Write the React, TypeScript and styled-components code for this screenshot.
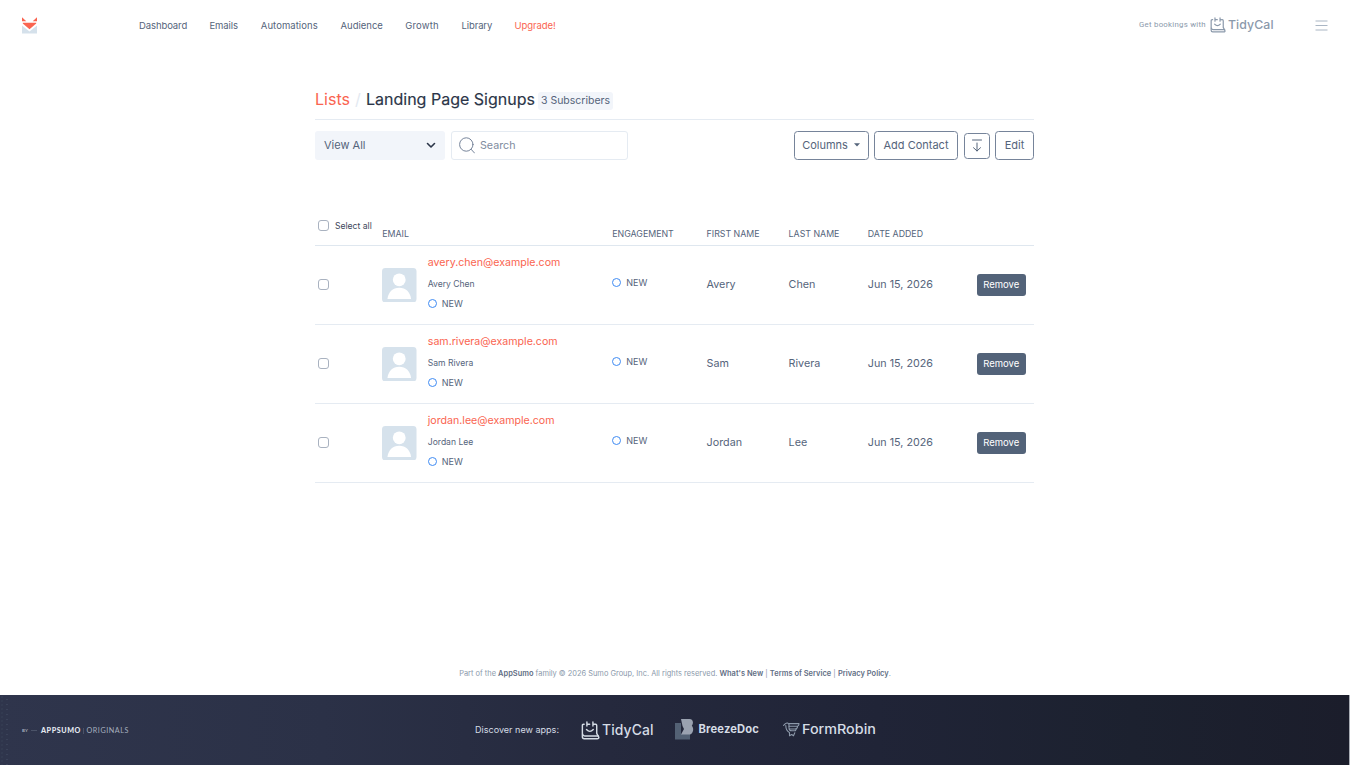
import React from 'react';
import styled, { createGlobalStyle, css } from 'styled-components';

const c = {
  coral: '#fa6450',
  navy: '#2b3548',
  slate: '#55647b',
  muted: '#8b99ab',
  line: '#e5ebf2',
  soft: '#f2f5fa',
};

const Global = createGlobalStyle`
  * { box-sizing: border-box; }
  body {
    margin: 0;
    background: #fff;
    font-family: Inter, "Liberation Sans", sans-serif;
    color: ${c.slate};
    overflow: hidden;
  }
  button, input { font-family: inherit; }
  a { color: inherit; text-decoration: none; }
`;

const Page = styled.div`
  width: 1350px;
  height: 765px;
  display: flex;
  flex-direction: column;
`;

/* ---------- top bar ---------- */
const TopBar = styled.header`
  height: 50px;
  flex: none;
  display: flex;
  align-items: center;
  padding: 0 22px;
`;
const LogoLink = styled.a`
  width: 117px;
  display: flex;
`;
const Nav = styled.nav`
  display: flex;
  gap: 22.4px;
  flex: 1;
`;
const NavLink = styled.a<{ $w: number; $track?: number; $hot?: boolean }>`
  width: ${p => p.$w}px;
  padding-top: 1px;
  font-size: 9.5px;
  letter-spacing: ${p => p.$track ?? 0}px;
  line-height: 16px;
  white-space: nowrap;
  color: ${p => (p.$hot ? c.coral : c.slate)};
`;
const Promo = styled.div`
  display: flex;
  align-items: center;
  gap: 4px;
  width: 176px;
  color: ${c.muted};
`;
const PromoText = styled.span`
  font: 400 7.8px/14px Roboto, sans-serif;
  letter-spacing: 0.27px;
  white-space: nowrap;
`;
const TidyMark = styled.span<{ $size: number }>`
  display: flex;
  align-items: center;
  gap: 2px;
  font-size: ${p => p.$size}px;
  line-height: 18px;
  font-weight: 500;
  letter-spacing: 0.1px;
`;
const MenuButton = styled.button`
  display: flex;
  border: 0;
  padding: 0;
  background: none;
`;

/* ---------- content ---------- */
const Main = styled.main`
  width: 719px;
  margin-left: 315px;
  flex: 1;
`;
const TitleRow = styled.div`
  height: 70px;
  padding-top: 40px;
  display: flex;
  align-items: flex-start;
  border-bottom: 1px solid ${c.line};
`;
const Crumb = styled.a`
  font-size: 16.1px;
  line-height: 18px;
  color: ${c.coral};
  width: 35px;
`;
const Slash = styled.span`
  font-size: 16px;
  line-height: 18px;
  width: 16px;
  text-align: center;
  color: #e3e9f1;
`;
const Title = styled.h1`
  margin: 0 4px 0 0;
  width: 168px;
  white-space: nowrap;
  font-size: 16px;
  line-height: 18px;
  font-weight: 400;
  -webkit-text-stroke: 0.15px currentColor;
  color: ${c.navy};
`;
const CountBadge = styled.span`
  margin-top: 2px;
  height: 18px;
  width: 75px;
  text-align: center;
  border-radius: 3px;
  background: ${c.soft};
  font-size: 10.5px;
  line-height: 18px;
  white-space: nowrap;
`;
const Controls = styled.div`
  display: flex;
  align-items: center;
  gap: 6px;
  margin-top: 11px;
`;
const Select = styled.button`
  width: 130px;
  height: 29px;
  display: flex;
  align-items: center;
  justify-content: space-between;
  padding: 0 9px 1px;
  border: 0;
  border-radius: 3px;
  background: ${c.soft};
  color: ${c.slate};
  font-size: 11px;
`;
const SearchBox = styled.label`
  width: 177px;
  height: 29px;
  display: flex;
  align-items: center;
  gap: 5px;
  padding: 0 7px;
  border: 1px solid ${c.line};
  border-radius: 3px;
  margin-right: auto;
`;
const SearchInput = styled.input`
  border: 0;
  padding: 0;
  width: 130px;
  background: none;
  outline: 0;
  font-size: 10.7px;
  color: ${c.slate};
  &::placeholder { color: #7e8b9e; opacity: 1; }
`;
const Outline = styled.button<{ $w: number; $h?: number }>`
  width: ${p => p.$w}px;
  height: ${p => p.$h ?? 29}px;
  display: flex;
  align-items: center;
  justify-content: center;
  gap: 6px;
  padding: 0 0 1px;
  border: 1px solid #76849a;
  border-radius: 3.5px;
  background: #fff;
  color: ${c.slate};
  font-size: 11px;
  white-space: nowrap;
`;
const Actions = styled.div`
  display: flex;
  align-items: center;
  gap: 5.5px;
`;

/* ---------- table ---------- */
const columns = css`
  display: grid;
  grid-template-columns: 67.3px 230px 94.3px 82px 79.2px 109px 1fr;
`;
const TableHead = styled.div`
  ${columns}
  height: 32px;
  margin-top: 54px;
  border-bottom: 1px solid #dfe7ef;
`;
const HeadCell = styled.div`
  padding-top: 13px;
  font-size: 8.8px;
  line-height: 14px;
  white-space: nowrap;
`;
const SelectAll = styled.label`
  display: flex;
  align-items: center;
  gap: 6px;
  height: 11px;
  margin-top: 6px;
  padding-left: 3px;
  font-size: 8.6px;
  white-space: nowrap;
  color: #3c475a;
`;
const Check = styled.input.attrs({ type: 'checkbox' })`
  appearance: none;
  flex: none;
  width: 11px;
  height: 11px;
  margin: 0;
  border: 1px solid #a9b2c0;
  border-radius: 3px;
  background: #fff;
`;
const Row = styled.div`
  ${columns}
  height: 79px;
  align-items: center;
  border-bottom: 1px solid ${c.line};
`;
const CheckCell = styled.div`
  display: flex;
  padding: 0 0 1px 3px;
`;
const Contact = styled.div`
  display: flex;
  align-items: center;
  gap: 11px;
`;
const ContactText = styled.div`
  display: flex;
  flex-direction: column;
  padding-bottom: 5px;
`;
const Email = styled.a`
  font-size: 10.62px;
  line-height: 20px;
  color: ${c.coral};
`;
const Name = styled.span`
  font-size: 8.55px;
  line-height: 22px;
`;
const StatusTag = styled.span<{ $raised?: boolean }>`
  display: flex;
  align-items: center;
  gap: 5px;
  font-size: 9px;
  line-height: 17px;
  padding-bottom: ${p => (p.$raised ? 6 : 0)}px;
`;
const Ring = styled.i`
  width: 9px;
  height: 9px;
  border: 1.4px solid #3f8bf3;
  border-radius: 50%;
`;
const Cell = styled.div`
  font-size: 10.75px;
  line-height: 16px;
  white-space: nowrap;
`;
const Remove = styled.button`
  width: 49px;
  height: 22px;
  margin-bottom: 1px;
  padding: 0 0 1px;
  border: 0;
  border-radius: 3px;
  background: #536379;
  color: #fff;
  font-size: 9.5px;
`;

/* ---------- footer ---------- */
const Legal = styled.p`
  margin: 0;
  height: 28px;
  text-align: center;
  font-size: 7.45px;
  line-height: 14px;
  white-space: pre;
  color: ${c.muted};
`;
const LegalLink = styled.a`
  font-weight: 600;
  letter-spacing: 0.02px;
  color: #5f6e84;
`;
const Band = styled.footer`
  height: 70px;
  flex: none;
  display: flex;
  align-items: center;
  padding-left: 22px;
  border-right: 1px solid #a9adb5;
  color: #d5dce5;
  background:
    radial-gradient(circle, #3d455c 0.5px, transparent 0.8px) 0 0 / 4px 4px repeat-y,
    radial-gradient(circle, #3a4259 0.5px, transparent 0.8px) 5px 2px / 4px 5px repeat-y,
    linear-gradient(90deg, #2f354c 0%, #2b3147 24%, #25293d 45%, #202437 65%, #1c212f 84%, #1b1d2b 100%);
`;
const Originals = styled.div`
  width: 453px;
  display: flex;
  align-items: center;
  padding-top: 1px;
  font: 400 7.2px/12px Lato, sans-serif;
  letter-spacing: 0.55px;
  color: #a7b0bf;
`;
const By = styled.span`
  width: 9px;
  font-size: 4.5px;
  font-weight: 700;
  letter-spacing: 0.2px;
`;
const Dash = styled.span`
  width: 6px;
  height: 1px;
  margin-right: 4px;
  background: #4b5368;
`;
const Brand = styled.b`
  width: 42px;
  font-weight: 900;
  color: #e4e9f0;
`;
const Divider = styled.span`
  width: 1px;
  height: 6px;
  margin-right: 2.5px;
  background: #4b5368;
`;
const Discover = styled.span`
  width: 106px;
  font-size: 9.05px;
  line-height: 14px;
`;
const FooterTidy = styled.a`
  width: 94px;
`;
const Breeze = styled.a`
  width: 108px;
  display: flex;
  align-items: center;
  gap: 4.5px;
  padding-bottom: 2px;
  font-size: 11.2px;
  font-weight: 700;
  letter-spacing: 0.15px;
  line-height: 20px;
`;
const Robin = styled.a`
  display: flex;
  align-items: center;
  gap: 2px;
  padding-bottom: 2px;
  line-height: 20px;
`;
const RobinName = styled.span`
  font-size: 13.4px;
  font-weight: 500;
  transform: scaleX(1.07);
  transform-origin: left;
`;

const FoxLogo = () => (
  <svg width="15" height="17" viewBox="0 0 15 17">
    <path d="M0 8.500L7.500 14.500 15 8.500v8H0z" fill="#d5e1eb" />
    <path d="M0 .2l4.300 4H0zM15 .2v4h-4.300z" fill="#fa6450" />
    <path d="M.8 5.800h13.400v.7L7.500 12.300.8 6.500z" fill="#fa6450" />
  </svg>
);

const CalendarFace = ({ size }: { size: number }) => (
  <svg width={size} height={size} viewBox="0 0 18 18" fill="none" stroke="currentColor" strokeWidth="1.350" strokeLinecap="round" strokeLinejoin="round">
    <path d="M3 3H2.400Q1.300 3 1.300 4.200V15q0 1.800 1.800 1.800h12.200q2 0 1.500-1.500l-1.900-3.600V4.200q0-1.200-1-1.200h-.5" />
    <path d="M1.500 12.400q.4 1.800 2 1.800h13" />
    <path d="M5.600 1v3.800M11.300 1v3.800M5.600 3h2.600M11.300 3h1.500" />
    <path d="M5.200 8q3.200 3.600 6.400 0" />
  </svg>
);

const Avatar = () => (
  <svg width="34.500" height="34.500" viewBox="0 0 35 35">
    <rect width="35" height="35" rx="3.500" fill="#d6e2ec" />
    <circle cx="17.500" cy="12" r="6.500" fill="#fff" />
    <path d="M5.500 31.500C6.300 24.500 10.800 20 17.500 20s11.200 4.500 12 11.500z" fill="#fff" />
  </svg>
);

const navItems = [
  { label: 'Dashboard', w: 48, track: -0.1 },
  { label: 'Emails', w: 29, track: -0.08 },
  { label: 'Automations', w: 57.3, track: 0.06 },
  { label: 'Audience', w: 42.3 },
  { label: 'Growth', w: 34, track: 0.2 },
  { label: 'Library', w: 30.6, track: -0.12 },
  { label: 'Upgrade!', w: 41.3, track: -0.06, hot: true },
];

const contacts = [
  { email: 'avery.chen@example.com', first: 'Avery', last: 'Chen' },
  { email: 'sam.rivera@example.com', first: 'Sam', last: 'Rivera' },
  { email: 'jordan.lee@example.com', first: 'Jordan', last: 'Lee' },
];

export default function App() {
  return (
    <Page>
      <Global />
      <TopBar>
        <LogoLink href="#"><FoxLogo /></LogoLink>
        <Nav>
          {navItems.map(n => (
            <NavLink key={n.label} href="#" $w={n.w} $track={n.track} $hot={n.hot}>{n.label}</NavLink>
          ))}
        </Nav>
        <Promo>
          <PromoText>Get bookings with</PromoText>
          <TidyMark $size={12.3}><CalendarFace size={16} />TidyCal</TidyMark>
        </Promo>
        <MenuButton aria-label="Menu">
          <svg width="13" height="11" viewBox="0 0 13 11" stroke="#aab6c4" strokeWidth="1">
            <path d="M.5 1h12M.5 5.500h12M.5 10h12" />
          </svg>
        </MenuButton>
      </TopBar>

      <Main>
        <TitleRow>
          <Crumb href="#">Lists</Crumb>
          <Slash>/</Slash>
          <Title>Landing Page Signups</Title>
          <CountBadge>3 Subscribers</CountBadge>
        </TitleRow>

        <Controls>
          <Select>
            View All
            <svg width="10" height="7" viewBox="0 0 10 7" fill="none" stroke="#2b3548" strokeWidth="1.600" strokeLinecap="round" strokeLinejoin="round">
              <path d="M1.500 1.500L5 5l3.500-3.500" />
            </svg>
          </Select>
          <SearchBox>
            <svg width="16" height="17" viewBox="0 0 16 17" fill="none" stroke="#76849a" strokeWidth="1" strokeLinecap="round">
              <circle cx="7.300" cy="7.500" r="6.700" />
              <path d="M12.100 12.300l3.400 3.700" />
            </svg>
            <SearchInput placeholder="Search" />
          </SearchBox>
          <Actions>
            <Outline $w={75}>
              Columns
              <svg width="6" height="4" viewBox="0 0 6 4" fill="#55647b"><path d="M0 .3h6L3 3.500z" /></svg>
            </Outline>
            <Outline $w={84}>Add Contact</Outline>
            <Outline $w={26} $h={26} aria-label="Export">
              <svg width="12" height="13" viewBox="0 0 12 13" fill="none" stroke="#55647b" strokeWidth="1" strokeLinecap="round" strokeLinejoin="round">
                <path d="M1.500 1h9M6 4v8M2.500 8.700L6 12l3.500-3.300" />
              </svg>
            </Outline>
            <Outline $w={39}>Edit</Outline>
          </Actions>
        </Controls>

        <TableHead>
          <SelectAll><Check />Select all</SelectAll>
          <HeadCell>EMAIL</HeadCell>
          <HeadCell>ENGAGEMENT</HeadCell>
          <HeadCell>FIRST NAME</HeadCell>
          <HeadCell>LAST NAME</HeadCell>
          <HeadCell>DATE ADDED</HeadCell>
        </TableHead>
        {contacts.map(p => (
          <Row key={p.email}>
            <CheckCell><Check /></CheckCell>
            <Contact>
              <Avatar />
              <ContactText>
                <Email href="#">{p.email}</Email>
                <Name>{p.first} {p.last}</Name>
                <StatusTag><Ring />NEW</StatusTag>
              </ContactText>
            </Contact>
            <StatusTag $raised><Ring />NEW</StatusTag>
            <Cell>{p.first}</Cell>
            <Cell>{p.last}</Cell>
            <Cell>Jun 15, 2026</Cell>
            <Remove>Remove</Remove>
          </Row>
        ))}
      </Main>

      <Legal>
        {'Part of the '}<LegalLink href="#">AppSumo</LegalLink>{' family © 2026 Sumo Group, Inc. All rights reserved. '}
        <LegalLink href="#">What's New</LegalLink>{' | '}
        <LegalLink href="#">Terms of Service</LegalLink>{' | '}
        <LegalLink href="#">Privacy Policy</LegalLink>.
      </Legal>
      <Band>
        <Originals>
          <By>BY</By><Dash /><Brand>APPSUMO</Brand><Divider />ORIGINALS
        </Originals>
        <Discover>Discover new apps:</Discover>
        <FooterTidy href="#">
          <TidyMark $size={13.9}><CalendarFace size={19} />TidyCal</TidyMark>
        </FooterTidy>
        <Breeze href="#">
          <svg width="19" height="22" viewBox="0 0 19 22">
            <path d="M0 5h6v11h9v5.500H0z" fill="#536174" />
            <path d="M6 1h8.500c3.500 0 4.500 4 2.300 6.800C19.500 10.500 18 16.500 14 16.500H6l3-5.500L7.500 8z" fill="#9aa2b0" />
          </svg>
          BreezeDoc
        </Breeze>
        <Robin href="#">
          <svg width="17" height="15" viewBox="0 0 17 15" fill="none" stroke="#8d99aa" strokeWidth="1.100" strokeLinejoin="round" strokeLinecap="round">
            <path d="M.6 3.400L2.400 1.600Q4.800 0 6 2.500V6q0 2.800 2.800 2.800h3.600L13.200 7" />
            <path d="M6 1.600h10q0 2.700-2.600 2.700H6M14.600 4.300Q14.400 7 12 7H6.500" />
            <path d="M2.800 3.500Q2.800 8.800 6.500 10.500v3.300l2.200-1.300 1.800 1.300 1.300-3" />
          </svg>
          <RobinName>FormRobin</RobinName>
        </Robin>
      </Band>
    </Page>
  );
}
